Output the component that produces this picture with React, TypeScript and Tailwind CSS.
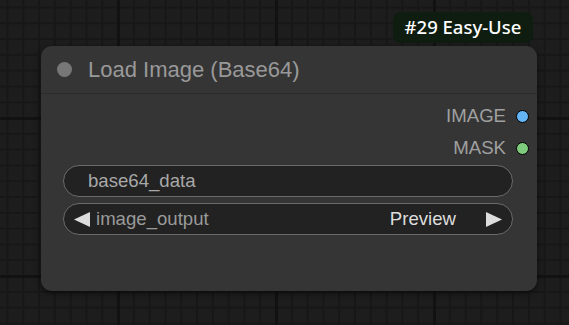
import type { ReactNode } from "react"

function OutputSlot({ label, color }: { label: string; color: string }) {
  return (
    <div className="flex h-[32px] items-center justify-end pr-[8px]">
      <span className="text-[18.6px] leading-none text-[#a0a0a0]">{label}</span>
      <span className={`ml-[10px] h-[13px] w-[13px] rounded-full border-[1.5px] border-black ${color}`} />
    </div>
  )
}

function Pill({ children }: { children: ReactNode }) {
  return (
    <div className="flex h-[32px] items-center rounded-full border border-[#6a6a6a] bg-[#222222] text-[18.6px] leading-none">
      {children}
    </div>
  )
}

export default function App() {
  return (
    <div
      className="relative h-[325px] w-[569px] overflow-hidden bg-[#1d1d1d] bg-[linear-gradient(to_right,#121212_3px,transparent_3px),linear-gradient(to_bottom,#121212_3px,transparent_3px),linear-gradient(to_right,#171717_2px,transparent_2px),linear-gradient(to_bottom,#171717_2px,transparent_2px)] bg-[size:158px_158px,158px_158px,15.8px_15.8px,15.8px_15.8px] bg-[position:117px_117px,117px_117px,6.5px_6.5px,6.5px_6.5px]"
      style={{ fontFamily: '"Liberation Sans", Arial, sans-serif' }}
    >
      {/* badge */}
      <div
        className="absolute left-[393px] top-[12px] flex h-[31px] w-[140px] items-center justify-center rounded-[8px] bg-[#0e1d0f] text-[18.5px] font-medium leading-none text-white"
        style={{ fontFamily: '"Noto Sans", "Open Sans", sans-serif' }}
      >
        #29 Easy-Use
      </div>

      {/* node */}
      <div className="absolute left-[41px] top-[46px] flex h-[245px] w-[496px] flex-col rounded-[11px] bg-[#353535] shadow-[0_2px_6px_rgba(0,0,0,0.55)]">
        <div className="flex h-[48px] items-center border-b-[1.5px] border-[#2c2c2c] pl-[16px]">
          <span className="h-[15px] w-[15px] rounded-full bg-[#777777]" />
          <span className="ml-[16px] text-[22px] leading-none text-[#999999]">Load Image (Base64)</span>
        </div>

        <div className="flex flex-col pt-[6px]">
          <OutputSlot label="IMAGE" color="bg-[#64b5f6]" />
          <OutputSlot label="MASK" color="bg-[#7ecb7e]" />

          <div className="mt-[1px] flex flex-col gap-[6px] pl-[22px] pr-[24px]">
            <Pill>
              <span className="pl-[24px] text-[#a8a8a8]">base64_data</span>
            </Pill>
            <Pill>
              <svg width="16" height="15" viewBox="0 0 16 15" className="ml-[10px]">
                <polygon points="16,0 16,15 0,7.5" fill="#dddddd" />
              </svg>
              <span className="ml-[6px] flex-1 text-[#9a9a9a]">image_output</span>
              <span className="text-[#dddddd]">Preview</span>
              <svg width="16" height="15" viewBox="0 0 16 15" className="ml-[30px] mr-[10px]">
                <polygon points="0,0 0,15 16,7.5" fill="#dddddd" />
              </svg>
            </Pill>
          </div>
        </div>
      </div>
    </div>
  )
}
